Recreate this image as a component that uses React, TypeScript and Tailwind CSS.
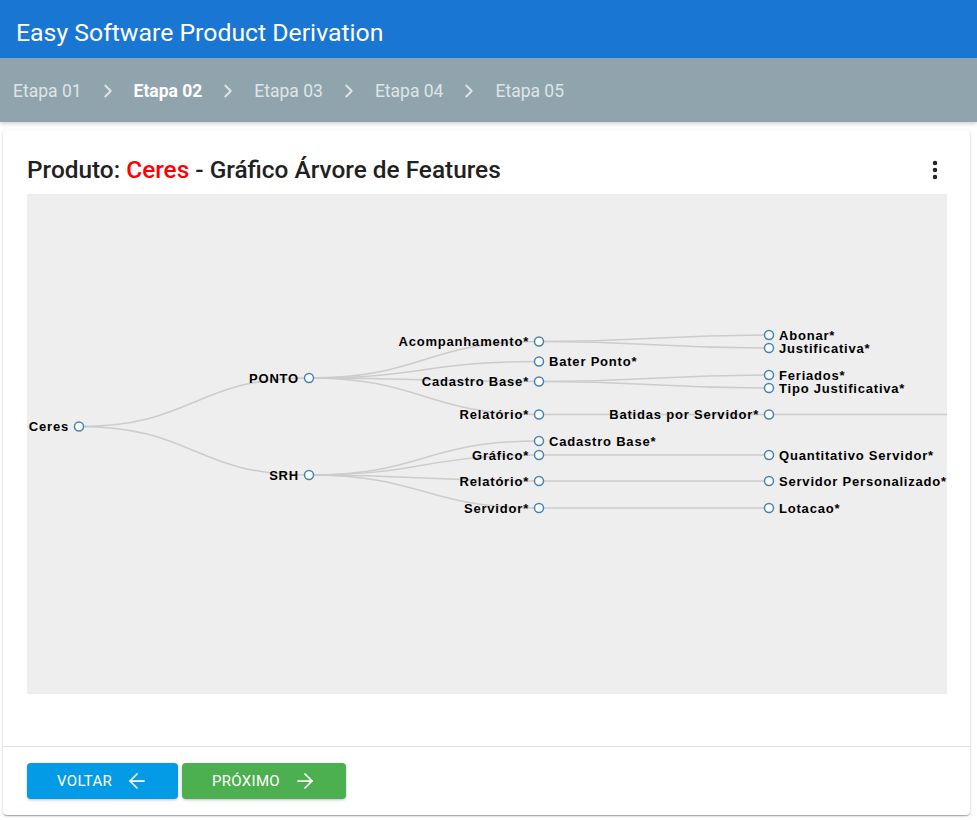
import { ChevronRight, EllipsisVertical, ArrowLeft, ArrowRight } from 'lucide-react';

type Node = { id: string; label: string; x: number; y: number; parent?: string; side: 'left' | 'right' };

// node positions are in page coordinates; the svg is shifted back by the panel origin
const nodes: Node[] = [
  { id: 'ceres', label: 'Ceres', x: 79, y: 426.5, side: 'left' },
  { id: 'ponto', label: 'PONTO', x: 309, y: 378, parent: 'ceres', side: 'left' },
  { id: 'srh', label: 'SRH', x: 309, y: 475, parent: 'ceres', side: 'left' },
  { id: 'acomp', label: 'Acompanhamento*', x: 539, y: 341.5, parent: 'ponto', side: 'left' },
  { id: 'bater', label: 'Bater Ponto*', x: 539, y: 361.5, parent: 'ponto', side: 'right' },
  { id: 'cadastro', label: 'Cadastro Base*', x: 539, y: 381.5, parent: 'ponto', side: 'left' },
  { id: 'relat', label: 'Relatório*', x: 539, y: 414.5, parent: 'ponto', side: 'left' },
  { id: 'cadastro2', label: 'Cadastro Base*', x: 539, y: 441, parent: 'srh', side: 'right' },
  { id: 'grafico', label: 'Gráfico*', x: 539, y: 455, parent: 'srh', side: 'left' },
  { id: 'relat2', label: 'Relatório*', x: 539, y: 481, parent: 'srh', side: 'left' },
  { id: 'servidor', label: 'Servidor*', x: 539, y: 508, parent: 'srh', side: 'left' },
  { id: 'abonar', label: 'Abonar*', x: 769, y: 335, parent: 'acomp', side: 'right' },
  { id: 'justif', label: 'Justificativa*', x: 769, y: 348, parent: 'acomp', side: 'right' },
  { id: 'feriados', label: 'Feriados*', x: 769, y: 375, parent: 'cadastro', side: 'right' },
  { id: 'tipo', label: 'Tipo Justificativa*', x: 769, y: 388, parent: 'cadastro', side: 'right' },
  { id: 'batidas', label: 'Batidas por Servidor*', x: 769, y: 414.5, parent: 'relat', side: 'left' },
  { id: 'quant', label: 'Quantitativo Servidor*', x: 769, y: 455, parent: 'grafico', side: 'right' },
  { id: 'servpers', label: 'Servidor Personalizado*', x: 769, y: 481, parent: 'relat2', side: 'right' },
  { id: 'lotacao', label: 'Lotacao*', x: 769, y: 508, parent: 'servidor', side: 'right' },
  { id: 'batidasChild', label: '', x: 999, y: 414.5, parent: 'batidas', side: 'right' },
];

const byId = Object.fromEntries(nodes.map((n) => [n.id, n]));

function linkPath(s: Node, t: Node) {
  const mx = (s.x + t.x) / 2;
  return `M${s.x},${s.y}C${mx},${s.y} ${mx},${t.y} ${t.x},${t.y}`;
}

function FeatureTree() {
  return (
    <svg width={920} height={500} className="block">
      <g transform="translate(-27,-194)">
        {nodes
          .filter((n) => n.parent)
          .map((n) => (
            <path key={n.id} d={linkPath(byId[n.parent!], n)} fill="none" stroke="#ccc" strokeWidth={1.5} />
          ))}
        {nodes
          .filter((n) => n.label)
          .map((n) => (
            <g key={n.id} transform={`translate(${n.x},${n.y})`}>
              <circle r={4.5} fill="#fff" stroke="steelblue" strokeWidth={1.5} />
              <text
                x={n.side === 'left' ? -10 : 10}
                dy="0.35em"
                textAnchor={n.side === 'left' ? 'end' : 'start'}
                fontFamily="'Liberation Sans', Arial, sans-serif"
                fontWeight="bold"
                fontSize={13}
                letterSpacing={0.8}
                fill="#000"
              >
                {n.label}
              </text>
            </g>
          ))}
      </g>
    </svg>
  );
}

export default function App() {
  const steps = ['Etapa 01', 'Etapa 02', 'Etapa 03', 'Etapa 04', 'Etapa 05'];

  return (
    <div className="min-h-screen bg-white font-['Roboto',sans-serif]">
      {/* Top bar */}
      <header className="h-[58px] bg-[#1976d2] flex items-center px-4 pt-2">
        <h1 className="text-white text-[24.8px] leading-none">Easy Software Product Derivation</h1>
      </header>

      {/* Stepper */}
      <nav className="h-[64px] bg-[#90a4ae] flex items-center pl-[13px] pt-[2px] shadow-[0_2px_4px_rgba(0,0,0,0.18)] relative z-10">
        {steps.map((step, i) => (
          <div key={step} className="flex items-center">
            {i > 0 && (
              <span className="mx-[14px] flex w-6 justify-center text-[#dfe5e8]">
                <ChevronRight size={22} strokeWidth={2} />
              </span>
            )}
            <span
              className={`text-[17.5px] ${i === 1 ? 'font-bold text-white' : 'text-[#dfe5e8]'}`}
            >
              {step}
            </span>
          </div>
        ))}
      </nav>

      {/* Card */}
      <main className="pt-[8px] pl-[3px]">
        <div className="w-[967px] bg-white rounded-sm shadow-[0_1px_3px_rgba(0,0,0,0.2),0_1px_1px_rgba(0,0,0,0.14),0_2px_1px_-1px_rgba(0,0,0,0.12)]">
          <div className="pt-4 pl-6">
            <div className="w-[920px] h-12 flex items-center justify-between">
              <h2 className="text-[24.4px] font-medium text-[#212121] leading-none">
                Produto: <span className="text-[#ff0000]">Ceres</span> - Gráfico Árvore de Features
              </h2>
              <EllipsisVertical size={24} className="text-[#212121]" strokeWidth={2.5} />
            </div>
            <div className="w-[920px] h-[500px] bg-[#eeeeee] overflow-hidden">
              <FeatureTree />
            </div>
            <div className="h-[52px]" />
          </div>

          <div className="border-t border-[#e0e0e0] px-6 py-4 flex gap-1">
            <button className="h-9 pl-[30px] pr-[29px] flex items-center gap-[13px] bg-[#039be5] text-white text-[15px] tracking-[0.3px] uppercase rounded-sm shadow-[0_1px_3px_rgba(0,0,0,0.25)]">
              Voltar
              <ArrowLeft size={24} strokeWidth={1.75} />
            </button>
            <button className="h-9 pl-[30px] pr-[29px] flex items-center gap-[13px] bg-[#4caf50] text-white text-[15px] tracking-[0.3px] uppercase rounded-sm shadow-[0_1px_3px_rgba(0,0,0,0.25)]">
              Próximo
              <ArrowRight size={24} strokeWidth={1.75} />
            </button>
          </div>
        </div>
      </main>
    </div>
  );
}
